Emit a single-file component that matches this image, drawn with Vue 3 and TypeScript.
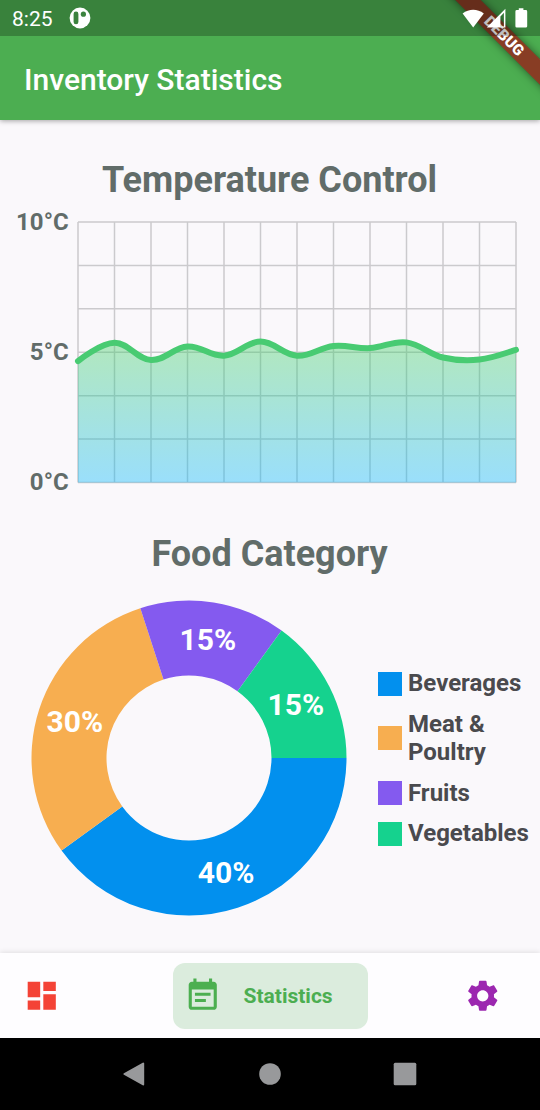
<script setup lang="ts">
interface Slice {
  name: string
  percent: number
  color: string
}

const readings: number[] = [4.66, 5.36, 4.7, 5.22, 4.87, 5.41, 4.87, 5.24, 5.16, 5.38, 4.8, 4.72, 5.09]
const plot = { left: 78, top: 18, width: 438, height: 260.5 }
const columns = 12
const rows = 6

const verticals = Array.from({ length: columns + 1 }, (_, i) => plot.left + (i * plot.width) / columns)
const horizontals = Array.from({ length: rows + 1 }, (_, i) => plot.top + (i * plot.height) / rows)
const bottom = plot.top + plot.height

const points = readings.map((value, i) => ({
  x: plot.left + (i * plot.width) / columns,
  y: bottom - (value / 10) * plot.height,
}))

function curve(smoothness: number): string {
  let d = `M${points[0].x} ${points[0].y}`
  let carry = { x: 0, y: 0 }
  for (let i = 1; i < points.length; i++) {
    const previous = points[i - 1]
    const current = points[i]
    const next = points[Math.min(i + 1, points.length - 1)]
    const handle = {
      x: ((next.x - previous.x) / 2) * smoothness,
      y: ((next.y - previous.y) / 2) * smoothness,
    }
    d += ` C${previous.x + carry.x} ${previous.y + carry.y} ${current.x - handle.x} ${current.y - handle.y} ${current.x} ${current.y}`
    carry = handle
  }
  return d
}

const line = curve(0.38)
const area = `${line} L${plot.left + plot.width} ${bottom} L${plot.left} ${bottom} Z`

const slices: Slice[] = [
  { name: 'Beverages', percent: 40, color: '#0290ee' },
  { name: 'Meat & Poultry', percent: 30, color: '#f7ae50' },
  { name: 'Fruits', percent: 15, color: '#845aef' },
  { name: 'Vegetables', percent: 15, color: '#15d28e' },
]

const ring = { center: 158, outer: 157.5, inner: 82.5 }

function polar(radius: number, fraction: number): { x: number; y: number } {
  const angle = fraction * Math.PI * 2
  return { x: ring.center + radius * Math.cos(angle), y: ring.center + radius * Math.sin(angle) }
}

const arcs = slices.map((slice, i) => {
  const start = slices.slice(0, i).reduce((sum, s) => sum + s.percent, 0) / 100
  const end = start + slice.percent / 100
  const a = polar(ring.outer, start)
  const b = polar(ring.outer, end)
  const c = polar(ring.inner, end)
  const e = polar(ring.inner, start)
  return {
    ...slice,
    d: `M${a.x} ${a.y} A${ring.outer} ${ring.outer} 0 0 1 ${b.x} ${b.y} L${c.x} ${c.y} A${ring.inner} ${ring.inner} 0 0 0 ${e.x} ${e.y} Z`,
    label: polar((ring.outer + ring.inner) / 2, (start + end) / 2),
  }
})
</script>

<template>
  <div class="screen">
    <header class="top">
      <div class="app-bar"><h1>Inventory Statistics</h1></div>
      <div class="banner"><span>DEBUG</span></div>
      <div class="status-bar">
        <span class="clock">8:25</span>
        <svg class="app-dot" width="22" height="22" viewBox="0 0 22 22">
          <circle cx="11" cy="11" r="10.4" fill="#fff" />
          <rect x="4.6" y="4.5" width="4.8" height="12.8" rx="2.4" fill="#3b823e" />
          <circle cx="14.4" cy="7.2" r="2.6" fill="#3b823e" />
        </svg>
        <svg class="signals" width="68" height="22" viewBox="0 0 68 22" fill="#fff">
          <path d="M0.6 5.4 C7 0.4 15.4 0.4 21.8 5.4 L11.2 19.4 Z" />
          <path fill-rule="evenodd" d="M24.8 19.5 L43.4 0.8 V19.5 Z M38.4 8.4 V18.4 H41.9 V4.8 Z" />
          <path d="M56.8 0.3 h4.6 v1.7 h2.4 a1.4 1.4 0 0 1 1.4 1.4 v14.8 a1.4 1.4 0 0 1 -1.4 1.4 h-9 a1.4 1.4 0 0 1 -1.4 -1.4 v-14.8 a1.4 1.4 0 0 1 1.4 -1.4 h2 z" />
        </svg>
      </div>
    </header>

    <main class="content">
      <h2 class="temperature-title">Temperature Control</h2>
      <svg class="line-chart" width="540" height="296" viewBox="0 0 540 296">
        <defs>
          <linearGradient id="fill" x1="0" y1="0" x2="0" y2="1">
            <stop offset="0" stop-color="#45cf60" stop-opacity="0.4" />
            <stop offset="1" stop-color="#0ab9fb" stop-opacity="0.4" />
          </linearGradient>
        </defs>
        <g class="grid">
          <line v-for="x in verticals" :key="`v${x}`" :x1="x" :x2="x" :y1="plot.top" :y2="bottom" />
          <line v-for="y in horizontals" :key="`h${y}`" :x1="plot.left" :x2="plot.left + plot.width" :y1="y" :y2="y" />
        </g>
        <path :d="area" fill="url(#fill)" />
        <path class="trend" :d="line" />
        <g class="axis">
          <text x="68.7" y="26.3">10°C</text>
          <text x="68.7" y="156.3">5°C</text>
          <text x="68.7" y="286.3">0°C</text>
        </g>
      </svg>

      <h2 class="food-title">Food Category</h2>
      <div class="food">
        <svg class="donut" width="316" height="316" viewBox="0 0 316 316">
          <path v-for="arc in arcs" :key="arc.name" :d="arc.d" :fill="arc.color" />
          <text v-for="arc in arcs" :key="`${arc.name}-label`" :x="arc.label.x" :y="arc.label.y + 11">{{ arc.percent }}%</text>
        </svg>
        <ul class="legend">
          <li v-for="slice in slices" :key="slice.name">
            <i :style="{ backgroundColor: slice.color }"></i>
            <span>{{ slice.name }}</span>
          </li>
        </ul>
      </div>
    </main>

    <nav class="tabs">
      <a class="tab">
        <svg class="icon" viewBox="0 0 24 24" fill="#f44336">
          <path d="M3 13h8V3H3v10zm0 8h8v-6H3v6zm10 0h8V11h-8v10zm0-18v6h8V3h-8z" />
        </svg>
      </a>
      <a class="tab active">
        <svg class="icon" viewBox="0 0 24 24" fill="#4caf50">
          <path d="M17 10H7v2h10v-2zm2-7h-1V1h-2v2H8V1H6v2H5c-1.11 0-1.99.9-1.99 2L3 19c0 1.1.89 2 2 2h14c1.1 0 2-.9 2-2V5c0-1.1-.9-2-2-2zm0 16H5V8h14v11zm-5-5H7v2h7v-2z" />
        </svg>
        <span>Statistics</span>
      </a>
      <a class="tab settings">
        <svg class="icon" viewBox="0 0 24 24" fill="#9c27b0">
          <path d="M19.14 12.94c.04-.3.06-.61.06-.94 0-.32-.02-.64-.07-.94l2.03-1.58c.18-.14.23-.41.12-.61l-1.92-3.32c-.12-.22-.37-.29-.59-.22l-2.39.96c-.5-.38-1.03-.7-1.62-.94l-.36-2.54c-.04-.24-.24-.41-.48-.41h-3.84c-.24 0-.43.17-.47.41l-.36 2.54c-.59.24-1.13.57-1.62.94l-2.39-.96c-.22-.08-.47 0-.59.22L2.74 8.87c-.12.21-.08.47.12.61l2.03 1.58c-.05.3-.09.63-.09.94s.02.64.07.94l-2.03 1.58c-.18.14-.23.41-.12.61l1.92 3.32c.12.22.37.29.59.22l2.39-.96c.5.38 1.03.7 1.62.94l.36 2.54c.05.24.24.41.48.41h3.84c.24 0 .44-.17.47-.41l.36-2.54c.59-.24 1.13-.56 1.62-.94l2.39.96c.22.08.47 0 .59-.22l1.92-3.32c.12-.22.07-.47-.12-.61l-2.01-1.58zM12 15.6c-1.98 0-3.6-1.62-3.6-3.6s1.62-3.6 3.6-3.6 3.6 1.62 3.6 3.6-1.62 3.6-3.6 3.6z" />
        </svg>
      </a>
    </nav>

    <footer class="system-nav">
      <svg width="24" height="26" viewBox="0 0 24 26"><path d="M20.2 2.5 V23.5 L1.4 13 Z" fill="#98999b" stroke="#98999b" stroke-width="2" stroke-linejoin="round" /></svg>
      <svg width="24" height="26" viewBox="0 0 24 26"><circle cx="12" cy="13" r="10.8" fill="#98999b" /></svg>
      <svg width="24" height="26" viewBox="0 0 24 26"><rect x="0.7" y="1.7" width="22.6" height="22.6" rx="1.5" fill="#98999b" /></svg>
    </footer>
  </div>
</template>

<style>
body {
  margin: 0;
  overflow: hidden;
}
</style>

<style scoped>
.screen {
  width: 540px;
  height: 1110px;
  display: flex;
  flex-direction: column;
  overflow: hidden;
  background: #faf8fb;
  font-family: Roboto, "Liberation Sans", sans-serif;
}
.top {
  position: relative;
  z-index: 1;
  flex: none;
  height: 120px;
  box-sizing: border-box;
  padding-top: 36px;
  background: #4cae51;
  box-shadow: 0 1px 5px rgba(0, 0, 0, 0.35);
}
.app-bar {
  height: 84px;
  padding: 3px 24px 0;
  box-sizing: border-box;
  display: flex;
  align-items: center;
}
h1 {
  margin: 0;
  color: #fff;
  font-size: 30px;
  font-weight: 500;
  line-height: 36px;
}
.banner {
  position: absolute;
  top: 0;
  right: 0;
  width: 120px;
  height: 120px;
  overflow: hidden;
}
.banner span {
  position: absolute;
  left: 4px;
  top: 27px;
  width: 160px;
  height: 18px;
  transform: rotate(45deg);
  background: rgba(160, 18, 20, 0.72);
  box-shadow: 0 0 9px rgba(0, 0, 0, 0.5);
  color: #fff;
  font-size: 15.3px;
  font-weight: 900;
  line-height: 18px;
  text-align: center;
}
.status-bar {
  position: absolute;
  inset: 0 0 auto 0;
  height: 36px;
  display: flex;
  align-items: center;
  box-sizing: border-box;
  padding: 0 10px 0 12px;
  background: rgba(0, 0, 0, 0.25);
}
.clock {
  color: #fff;
  font-size: 21px;
  line-height: 36px;
  padding-top: 2px;
}
.app-dot {
  margin-left: 16px;
}
.signals {
  margin-left: auto;
  margin-top: 1px;
}
.content {
  flex: none;
  height: 833px;
  display: flex;
  flex-direction: column;
}
h2 {
  margin: 0;
  color: #616c69;
  font-size: 36px;
  font-weight: 700;
  line-height: 42px;
  text-align: center;
}
.temperature-title {
  padding: 39px 1px 0 0;
}
.line-chart {
  display: block;
  flex: none;
  margin-top: 3px;
}
.grid line {
  stroke: #cbcacd;
  stroke-width: 1.5;
}
.trend {
  fill: none;
  stroke: #48cb72;
  stroke-width: 6;
  stroke-linecap: round;
}
.axis text {
  fill: #616c69;
  font-size: 24px;
  font-weight: 700;
  text-anchor: end;
}
.food-title {
  padding: 33px 1px 0 0;
}
.food {
  display: flex;
  align-items: center;
  margin-top: 25px;
  padding-left: 31px;
}
.donut {
  flex: none;
}
.donut text {
  fill: #fff;
  font-size: 30px;
  font-weight: 700;
  text-anchor: middle;
}
.legend {
  list-style: none;
  margin: 1px 0 0 31px;
  padding: 0;
  display: flex;
  flex-direction: column;
  gap: 12px;
}
.legend li {
  display: flex;
  align-items: center;
  gap: 6px;
  color: #4a4a4e;
  font-size: 24px;
  font-weight: 700;
  line-height: 28.5px;
}
.legend i {
  flex: none;
  width: 24px;
  height: 24px;
}
.legend span {
  width: 125px;
}
.tabs {
  flex: none;
  height: 85px;
  box-sizing: border-box;
  padding: 0 25px 0 9px;
  display: flex;
  align-items: center;
  background: #fefdff;
  box-shadow: 0 -1px 5px rgba(0, 0, 0, 0.1);
}
.tab {
  display: flex;
  align-items: center;
  height: 66px;
  padding: 0 14px;
}
.tab.active {
  box-sizing: border-box;
  width: 195px;
  margin-left: 98px;
  padding: 0 0 0 11px;
  border-radius: 12px;
  background: #dbecdd;
  color: #4cae51;
  font-size: 21px;
  font-weight: 700;
}
.tab.active span {
  margin-left: 22.5px;
}
.tab.settings {
  margin-left: auto;
}
.icon {
  flex: none;
  width: 37.5px;
  height: 37.5px;
}
.system-nav {
  flex: none;
  height: 72px;
  display: flex;
  align-items: center;
  justify-content: center;
  gap: 111px;
  background: #000;
}
</style>
